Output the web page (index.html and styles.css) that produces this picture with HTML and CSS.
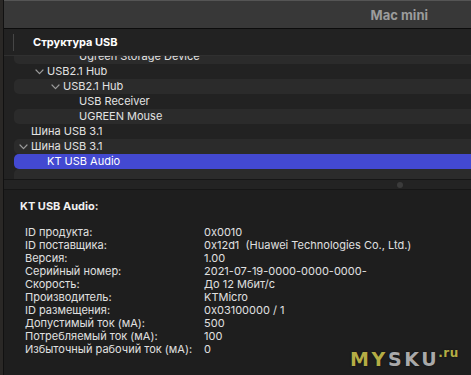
FILE: index.html
```html
<!DOCTYPE html>
<html lang="ru">
<head>
<meta charset="utf-8">
<title>Mac mini</title>
<link rel="stylesheet" href="styles.css">
</head>
<body>
<div class="app">
  <div class="main">
    <div class="titlebar"><span class="title">Mac mini</span></div>
    <div class="header"><span class="divider"></span><span class="header-text">Структура USB</span></div>
    <div class="tree">
      <div class="rows">
        <div class="row alt l3"><span class="slot"></span><span class="label">Ugreen Storage Device</span></div>
        <div class="row l1"><span class="slot"><svg class="chev" width="9" height="6" viewBox="0 0 9 6"><polyline points="1,1 4.5,4.6 8,1"/></svg></span><span class="label">USB2.1 Hub</span></div>
        <div class="row alt l2"><span class="slot"><svg class="chev" width="9" height="6" viewBox="0 0 9 6"><polyline points="1,1 4.5,4.6 8,1"/></svg></span><span class="label">USB2.1 Hub</span></div>
        <div class="row l3"><span class="slot"></span><span class="label">USB Receiver</span></div>
        <div class="row alt l3"><span class="slot"></span><span class="label">UGREEN Mouse</span></div>
        <div class="row l0"><span class="slot"></span><span class="label">Шина USB 3.1</span></div>
        <div class="row alt l0"><span class="slot"><svg class="chev" width="9" height="6" viewBox="0 0 9 6"><polyline points="1,1 4.5,4.6 8,1"/></svg></span><span class="label">Шина USB 3.1</span></div>
        <div class="row sel l1"><span class="slot"></span><span class="label">KT USB Audio</span></div>
        <div class="row alt l0"><span class="slot"></span><span class="label"></span></div>
      </div>
    </div>
    <div class="splitter"><span class="grip"></span></div>
    <div class="details">
      <div class="details-title">KT USB Audio:</div>
      <div class="props">
        <span class="k">ID продукта:</span><span class="v">0x0010</span>
        <span class="k">ID поставщика:</span><span class="v">0x12d1&nbsp; (Huawei Technologies Co., Ltd.)</span>
        <span class="k">Версия:</span><span class="v">1.00</span>
        <span class="k">Серийный номер:</span><span class="v">2021-07-19-0000-0000-0000-</span>
        <span class="k">Скорость:</span><span class="v">До 12 Мбит/с</span>
        <span class="k">Производитель:</span><span class="v">KTMicro</span>
        <span class="k">ID размещения:</span><span class="v">0x03100000 / 1</span>
        <span class="k">Допустимый ток (мА):</span><span class="v">500</span>
        <span class="k">Потребляемый ток (мА):</span><span class="v">100</span>
        <span class="k">Избыточный рабочий ток (мА):</span><span class="v">0</span>
      </div>
    </div>
  </div>
  <div class="watermark"><span class="wm-my">MY</span><span class="wm-sku">SKU</span><span class="wm-ru">.ru</span></div>
</div>
</body>
</html>
```
FILE: styles.css
```css
html, body {
  margin: 0;
  padding: 0;
  background: #1e1e1e;
  width: 471px;
  height: 375px;
  overflow: hidden;
}
body {
  font-family: Inter, "Liberation Sans", Arial, sans-serif;
  font-size: 11px;
  color: #e2e2e2;
}
.app {
  position: relative;
  height: 375px;
  border-left: 3px solid #2a2826;
  box-sizing: border-box;
}
.main {
  height: 375px;
  border-left: 1px solid #111111;
  display: flex;
  flex-direction: column;
  background: #1e1e1e;
}
.titlebar {
  height: 27px;
  border-top: 1px solid #555555;
  border-bottom: 1px solid #0c0c0c;
  background: #383838;
  display: flex;
  align-items: center;
  justify-content: flex-end;
  padding-right: 43px;
}
.title {
  font-weight: bold;
  font-size: 13px;
  color: #9c9c9c;
}
.header {
  height: 26px;
  background: #222222;
  border-bottom: 1px solid #303030;
  display: flex;
  align-items: center;
}
.divider {
  width: 1px;
  height: 17px;
  background: #464646;
  margin-left: 9px;
}
.header-text {
  margin-left: 19px;
  font-weight: bold;
  color: #ffffff;
}
.tree {
  height: 123px;
  overflow: hidden;
  background: #222222;
}
.rows {
  margin-top: -7px;
}
.row {
  height: 15px;
  margin-left: 10px;
  display: flex;
  align-items: center;
  border-radius: 5px 0 0 5px;
  white-space: nowrap;
}
.row.alt { background: #2b2b2b; }
.row.sel { background: #4349d1; color: #ffffff; }
.row.l0 { padding-left: 1px; }
.row.l1 { padding-left: 17px; }
.row.l2 { padding-left: 33px; }
.row.l3 { padding-left: 49px; }
.slot {
  width: 16px;
  height: 15px;
  display: flex;
  align-items: center;
  padding-left: 4px;
  box-sizing: border-box;
}
.chev polyline {
  fill: none;
  stroke: #9a9a9a;
  stroke-width: 1.2;
  stroke-linecap: round;
  stroke-linejoin: round;
}
.label { line-height: 15px; }
.splitter {
  height: 9px;
  border-top: 1px solid #161616;
  border-bottom: 1px solid #161616;
  background: #232323;
  display: flex;
  align-items: center;
  padding-left: 393px;
}
.grip {
  width: 6px;
  height: 6px;
  border-radius: 50%;
  background: #3b3b3b;
}
.details {
  flex: 1;
  padding: 10px 0 0 16px;
  background: #1e1e1e;
}
.details-title {
  font-weight: bold;
  color: #f0f0f0;
  line-height: 13px;
}
.props {
  margin-top: 13px;
  padding-left: 5px;
  display: grid;
  grid-template-columns: 179px auto;
  line-height: 13px;
  color: #e0e0e0;
  white-space: nowrap;
}
.watermark {
  position: absolute;
  left: 347px;
  top: 341px;
  font-family: "DejaVu Sans", sans-serif;
  font-weight: bold;
  font-size: 19px;
  letter-spacing: 2.6px;
  line-height: 24px;
  text-shadow: 0 0 2px rgba(0,0,0,0.6);
}
.wm-my { color: #b4ad45; }
.wm-sku { color: #a9a9a9; }
.wm-ru {
  color: #b4ad45;
  font-size: 12px;
  letter-spacing: 0.5px;
  vertical-align: 9px;
  margin-left: -1px;
}
```
